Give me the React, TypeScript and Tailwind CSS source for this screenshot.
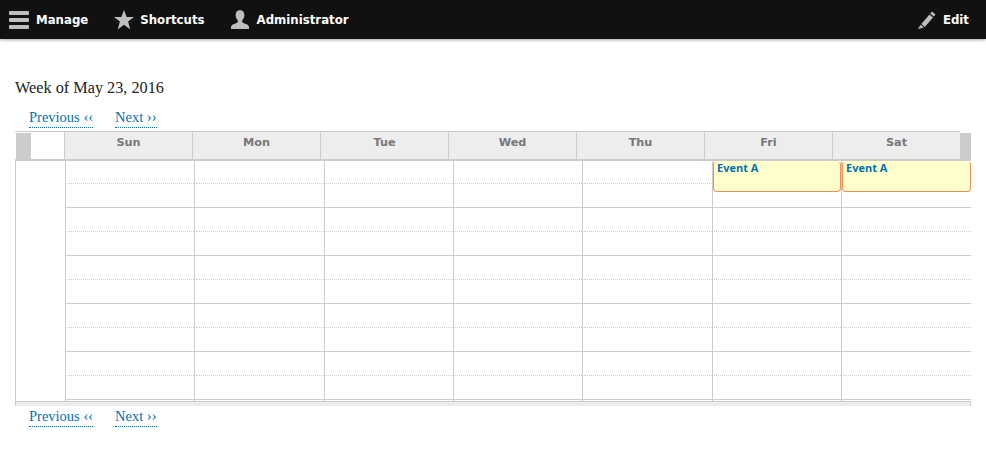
const DAYS = ["Sun", "Mon", "Tue", "Wed", "Thu", "Fri", "Sat"];

const COLUMNS = [
  { key: "sun", width: "w-[129px]", event: false },
  { key: "mon", width: "w-[130px]", event: false },
  { key: "tue", width: "w-[129px]", event: false },
  { key: "wed", width: "w-[129px]", event: false },
  { key: "thu", width: "w-[130px]", event: false },
  { key: "fri", width: "w-[129px]", event: true },
  { key: "sat", width: "w-[130px]", event: true },
];

const HOURS = [0, 1, 2, 3, 4];

function Pager({ className }: { className: string }) {
  return (
    <div className={`flex gap-[22px] pl-[14px] font-['Liberation_Serif',serif] text-[14.5px] leading-[18px] text-[#0071b3] ${className}`}>
      <a className="border-b border-dotted border-[#0071b3] pb-px">Previous ‹‹</a>
      <a className="border-b border-dotted border-[#0071b3] pb-px">Next ››</a>
    </div>
  );
}

export default function App() {
  return (
    <div className="h-[455px] w-[986px] overflow-hidden bg-white font-['DejaVu_Sans',sans-serif]">
      {/* Toolbar */}
      <nav className="flex h-[39px] items-center justify-between bg-[#111111] pr-[17px] text-[11.75px] font-bold text-white shadow-[0_1px_3px_rgba(0,0,0,0.35)]">
        <div className="flex items-center">
          <div className="ml-[9px] flex items-center gap-[7px]">
            <svg width="20" height="20" viewBox="0 0 20 20" fill="#bebebe">
              <rect x="0" y="1" width="20" height="4" rx="1" />
              <rect x="0" y="8" width="20" height="4" rx="1" />
              <rect x="0" y="15" width="20" height="4" rx="1" />
            </svg>
            <span className="pt-[3px]">Manage</span>
          </div>
          <div className="ml-[26px] flex items-center gap-[6px]">
            <svg width="20" height="20" viewBox="0 0 20 20" fill="#bebebe">
              <path d="M10 0l2.7 7h7.3l-5.900 4.600 2.200 7.900-6.300-4.700-6.300 4.700 2.200-7.900L0 7h7.300z" />
            </svg>
            <span className="pt-[3px]">Shortcuts</span>
          </div>
          <div className="ml-[26px] flex items-center gap-[8px]">
            <svg width="18" height="20" viewBox="0 0 18 20" fill="#bebebe">
              <path d="M9 0c2.800 0 4.400 2.200 4.400 5 0 2.300-1 4.200-2.200 5.200v1.600c0 .9 1.200 1.300 3 2 2 .8 3.800 1.400 3.800 3.400V19H0v-1.800c0-2 1.800-2.600 3.800-3.400 1.800-.7 3-1.100 3-2v-1.600C5.600 9.200 4.600 7.300 4.600 5 4.600 2.200 6.200 0 9 0z" />
            </svg>
            <span className="pt-[3px]">Administrator</span>
          </div>
        </div>
        <div className="flex items-center gap-[7px]">
          <svg width="18" height="18" viewBox="0 0 18 18" fill="#bebebe">
            <path d="M14 0.500l3.500 3-1.700 2.100-3.500-3zM11.500 3.600l3.500 3-8.200 9.300-3.500-3zM2.800 13.800l3 2.600-4.500 1.400c-.8.200-1.200-.2-.9-.9z" />
          </svg>
          <span className="pt-[3px]">Edit</span>
        </div>
      </nav>

      <main className="pl-[15px] pr-[15px]">
        <h2 className="mt-[40px] font-['Liberation_Serif',serif] text-[16.25px] font-normal leading-[18px] text-[#222222]">
          Week of May 23, 2016
        </h2>
        <Pager className="mt-[11px]" />

        {/* Week header */}
        <div className="mt-[3px] flex h-[30px] w-[956px] border-b-2 border-[#cccccc]">
          <div className="flex w-[49px] flex-none border-t border-[#cccccc] pl-px pt-px">
            <div className="w-[15px] bg-[#cccccc]" />
          </div>
          {DAYS.map((day) => (
            <div
              key={day}
              className="flex w-[128px] flex-none items-center justify-center border-l border-t border-[#cccccc] bg-[#ededed] pb-[4px] text-[11.25px] font-bold text-[#777777]"
            >
              {day}
            </div>
          ))}
          <div className="mt-[2px] w-[11px] flex-none border-l border-[#cccccc] bg-[#cccccc]" />
        </div>

        {/* Week grid */}
        <div className="flex w-[956px] border-l border-[#cccccc]">
          <div className="w-[49px] flex-none" />
          {COLUMNS.map((col) => (
            <div key={col.key} className={`relative flex-none border-l border-[#cccccc] pb-px ${col.width}`}>
              {HOURS.map((hour) => (
                <div
                  key={hour}
                  className={`border-b border-[#cccccc] ${hour === 0 ? "h-[47px] pt-[22px]" : "h-[48px] pt-[23px]"}`}
                >
                  <div className="ml-px border-t border-dotted border-[#cccccc]" />
                </div>
              ))}
              {col.event && (
                <div className="absolute left-0 right-0 top-0 h-[31px] rounded-[4px] border border-[#e8925c] border-t-[#ffffcc] bg-[#ffffcc] pl-[3px] font-['Open_Sans',sans-serif] text-[11px] font-bold leading-[12px] text-[#0071b3]">
                  Event A
                </div>
              )}
            </div>
          ))}
        </div>
        <div className="h-[5px] w-[956px] border-l border-r border-t border-[#cccccc] bg-[#ededed]" />
        <Pager className="mt-[1px]" />
      </main>
    </div>
  );
}
